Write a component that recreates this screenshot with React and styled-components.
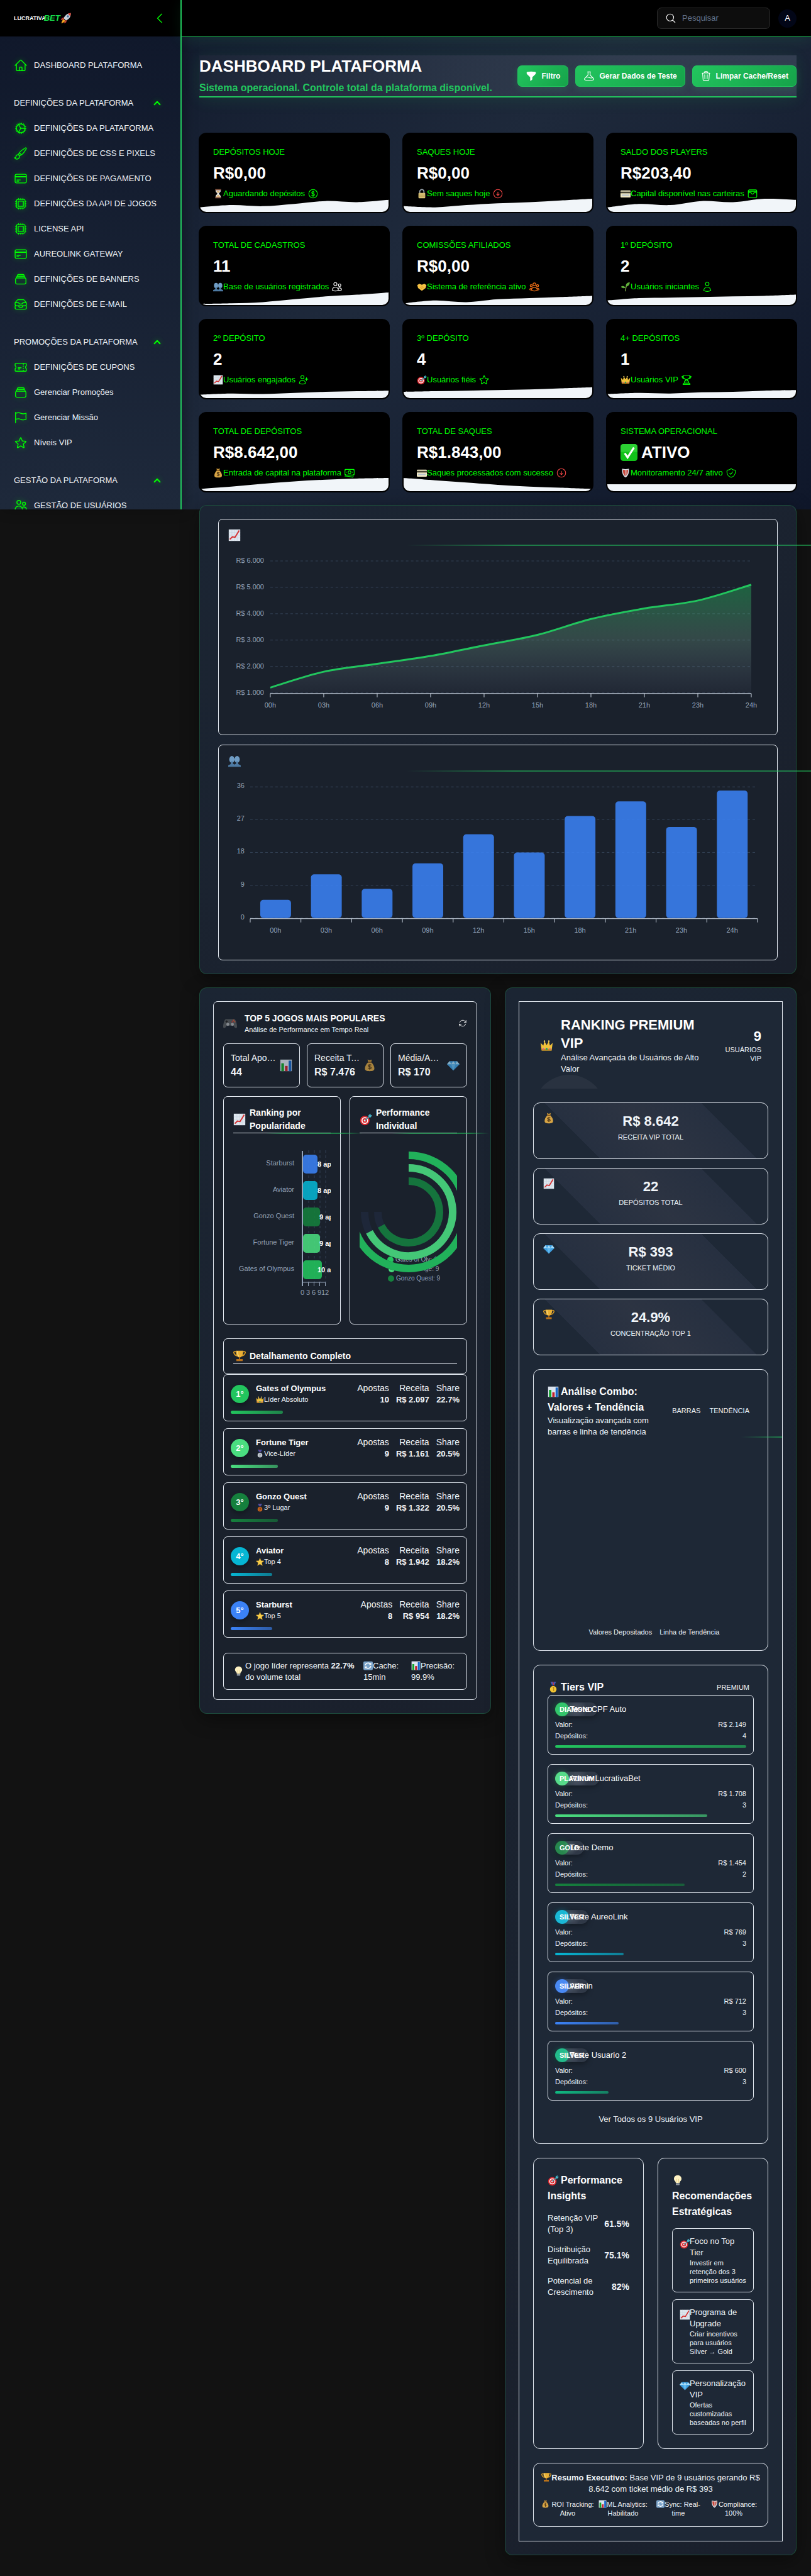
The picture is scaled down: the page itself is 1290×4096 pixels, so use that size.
import React from "react";
import styled, { createGlobalStyle, css } from "styled-components";
import {
  HiOutlineHome, HiOutlineCog, HiOutlinePaintBrush, HiOutlineCreditCard, HiOutlineCpuChip,
  HiOutlineRectangleStack, HiOutlineInboxStack, HiOutlineTicket, HiOutlineFlag, HiOutlineStar,
  HiOutlineUsers, HiOutlineCurrencyDollar, HiOutlineArrowDownCircle, HiOutlineWallet,
  HiOutlineUserGroup, HiOutlineUser, HiOutlineUserPlus, HiOutlineTrophy, HiOutlineBanknotes,
  HiOutlineShieldCheck, HiFunnel, HiOutlineBeaker, HiOutlineTrash, HiOutlineArrowPath,
  HiOutlineMagnifyingGlass, HiChevronUp, HiOutlineChevronLeft,
} from "react-icons/hi2";

const SANS = `"Liberation Sans", Helvetica, Arial, sans-serif`;
const GREEN = "#22c55e";
const NEON = "#00ff00";
const LINE = "#e2e8f0";

const GlobalStyle = createGlobalStyle`
  *, *::before, *::after { box-sizing: border-box; }
  html { background: #121212; }
  body { margin: 0; font-family: ${SANS}; font-size: 13px; line-height: 18px; color: #f1f5f9; }
  h1, h2, h3, h4, p, ul, dl, dd, dt { margin: 0; padding: 0; }
  ul { list-style: none; }
  button, input { font: inherit; color: inherit; }
  button { background: none; border: 0; padding: 0; cursor: pointer; }
  a { color: inherit; text-decoration: none; }
  svg { display: block; flex: none; }
`;

/* ---------- shell ---------- */

const Shell = styled.div`
  display: flex;
  align-items: flex-start;
  overflow-x: clip;
  background: linear-gradient(135deg, #0f172a 0%, #1e293b 50%, #0f172a 100%) no-repeat 0 0 / 100% 810px;
`;

const Sidebar = styled.aside`
  flex: none;
  width: 289px;
  height: 810px;
  overflow: hidden;
  border-right: 2px solid ${GREEN};
  background: linear-gradient(180deg, #0f172a, #1e293b);
  box-shadow: 4px 0 20px rgba(0, 0, 0, 0.3);
`;

const Brand = styled.div`
  display: flex;
  align-items: center;
  justify-content: space-between;
  height: 58px;
  padding: 0 22px;
  background: #000;
`;

const Logo = styled.a`
  display: flex;
  align-items: center;
  font-size: 9px;
  font-weight: 700;
  color: #fff;
`;

const LogoBet = styled.span`
  margin-left: -3px;
  font-size: 13px;
  font-style: italic;
  color: #16e04a;
`;

const Nav = styled.nav`
  display: flex;
  flex-direction: column;
  padding: 26px 22px 0;
`;

const NavGroup = styled.div`
  margin-bottom: 20px;
`;

const NavHeading = styled.button`
  display: flex;
  align-items: center;
  justify-content: space-between;
  width: 100%;
  height: 40px;
  padding-right: 8px;
  text-align: left;
  svg { color: ${NEON}; stroke: ${NEON}; stroke-width: 2; filter: drop-shadow(0 0 4px rgba(0, 255, 0, 0.4)); }
`;

const NavLink = styled.a`
  display: flex;
  align-items: center;
  gap: 10px;
  height: 40px;
  white-space: nowrap;
  svg { color: ${NEON}; filter: drop-shadow(0 0 4px rgba(0, 255, 0, 0.4)); }
`;

const Main = styled.main`
  flex: 1;
  min-width: 0;
`;

const TopBar = styled.header`
  display: flex;
  align-items: center;
  justify-content: flex-end;
  gap: 13px;
  height: 59px;
  padding: 0 23px;
  background: #000;
  border-bottom: 1px solid ${GREEN};
  box-shadow: 0 4px 24px rgba(34, 197, 94, 0.12);
`;

const Search = styled.label`
  display: flex;
  align-items: center;
  gap: 9px;
  width: 180px;
  height: 34px;
  padding: 0 12px;
  border: 1px solid #2b2b2b;
  border-radius: 7px;
  background: #0d0d0d;
  color: #fff;
  input {
    min-width: 0;
    flex: 1;
    padding: 0;
    border: 0;
    outline: 0;
    background: none;
  }
  input::placeholder { color: #64748b; opacity: 1; }
`;

const Avatar = styled.button`
  width: 29px;
  height: 29px;
  border-radius: 50%;
  background: #020617;
  color: #fff;
  font-size: 13px;
`;

const Content = styled.div`
  padding: 29px 23px 32px 28px;
`;

const PageHead = styled.div`
  display: flex;
  align-items: center;
  justify-content: space-between;
  height: 67px;
  margin-bottom: 56px;
  border-bottom: 2px solid ${GREEN};
  background: linear-gradient(90deg, rgba(255, 255, 255, 0.03), rgba(148, 163, 184, 0.2));
  box-shadow: 0 4px 24px rgba(34, 197, 94, 0.12);
`;

const PageTitle = styled.h1`
  font-size: 26px;
  line-height: 30px;
  color: #fff;
`;

const PageSub = styled.p`
  margin-top: 9px;
  font-size: 16px;
  line-height: 22px;
  font-weight: 700;
  color: ${GREEN};
`;

const Actions = styled.div`
  display: flex;
  gap: 11px;
`;

const ActionButton = styled.button`
  display: flex;
  align-items: center;
  gap: 7px;
  height: 34px;
  padding: 0 12px;
  border: 1px solid ${GREEN};
  border-radius: 7px;
  background: linear-gradient(135deg, #22c55e, #16a34a);
  box-shadow: 0 4px 12px rgba(34, 197, 94, 0.2);
  color: #fff;
  font-size: 12px;
  font-weight: 700;
  white-space: nowrap;
`;

/* ---------- metric cards ---------- */

const Metrics = styled.section`
  display: grid;
  grid-template-columns: repeat(3, 1fr);
  gap: 20px;
  margin: 0 -1px 20px;
`;

const Metric = styled.article`
  display: flex;
  flex-direction: column;
  height: 128px;
  padding: 22px 2px 2px;
  overflow: hidden;
  border-radius: 12px;
  background: #000;
`;

const MetricLabel = styled.h2`
  padding: 0 21px;
  font-size: 13px;
  font-weight: 400;
  color: ${NEON};
`;

const MetricValue = styled.p`
  display: flex;
  align-items: center;
  gap: 6px;
  margin: 8px 0;
  padding: 0 21px;
  font-size: 26px;
  line-height: 32px;
  font-weight: 700;
  color: #fff;
`;

const MetricNote = styled.p`
  display: flex;
  align-items: center;
  height: 17px;
  padding: 0 21px;
  color: ${NEON};
  white-space: nowrap;
  > svg:last-child { margin-left: 4px; color: ${(p) => p.$tone || NEON}; }
`;

const Wave = styled.svg`
  width: 100%;
  height: 21px;
  border-radius: 0 0 10px 10px;
`;

/* ---------- shared panels ---------- */

const Panel = styled.section`
  border: 1px solid rgba(34, 197, 94, 0.25);
  border-radius: 12px;
  background: linear-gradient(145deg, #1b2533, #1a202c);
  box-shadow: 0 8px 30px rgba(0, 0, 0, 0.4);
`;

const ChartPanel = styled(Panel)`
  display: grid;
  gap: 15px;
  padding: 21px 29px;
  margin-bottom: 21px;
`;

const Box = styled.div`
  border: 1px solid ${LINE};
  border-radius: ${(p) => p.$radius || 7}px;
`;

const ChartCard = styled(Box)`
  padding: 15px;
  background: #1a212c;
`;

const glowLine = css`
  position: relative;
  &::after {
    content: "";
    position: absolute;
    left: 33%;
    bottom: ${(p) => p.$drop || 0}px;
    width: 100%;
    height: 2px;
    background: linear-gradient(90deg, transparent, ${GREEN} 20%, ${GREEN} 80%, transparent);
    opacity: 0.55;
  }
`;

const ChartHead = styled.h3`
  ${glowLine}
  height: 27px;
`;

const ChartSvg = styled.svg`
  width: 100%;
  height: auto;
  font-family: ${SANS};
  font-size: 11px;
  fill: #94a3b8;
`;

const Columns = styled.div`
  display: grid;
  grid-template-columns: repeat(2, minmax(0, 1fr));
  align-items: start;
  gap: 22px;
`;

const SidePanel = styled(Panel)`
  padding: 21px;
`;

/* ---------- games ---------- */

const GamesCard = styled(Box)`
  padding: 16px 15px 15px;
  background: #1a212c;
`;

const GamesHead = styled.div`
  display: flex;
  align-items: center;
  gap: 12px;
  margin-bottom: 14px;
  > div { flex: 1; }
`;

const GamesTitle = styled.h2`
  font-size: 14px;
  line-height: 20px;
  color: #fff;
`;

const Small = styled.p`
  font-size: 11px;
  line-height: 16px;
`;

const IconButton = styled.button`
  display: flex;
  color: #fff;
`;

const Trio = styled.div`
  display: grid;
  grid-template-columns: repeat(3, minmax(0, 1fr));
  gap: 11px;
  margin-bottom: 14px;
`;

const TrioBox = styled(Box)`
  display: flex;
  align-items: center;
  gap: 5px;
  height: 70px;
  padding: 0 11px;
  > div { flex: 1; min-width: 0; }
`;

const TrioLabel = styled.p`
  overflow: hidden;
  font-size: 14px;
  line-height: 22px;
  text-overflow: ellipsis;
  white-space: nowrap;
`;

const TrioValue = styled.p`
  font-size: 16px;
  line-height: 24px;
  font-weight: 700;
  white-space: nowrap;
`;

const Pair = styled.div`
  display: grid;
  grid-template-columns: repeat(2, minmax(0, 1fr));
  gap: ${(p) => p.$gap}px;
  margin-bottom: 22px;
`;

const MiniCard = styled(Box)`
  padding: 15px;
`;

const MiniHead = styled.h3`
  ${(p) => p.$glow && glowLine}
  display: flex;
  align-items: center;
  gap: 6px;
  border-bottom: 1px solid ${LINE};
  font-size: 14px;
  line-height: 21px;
  color: #fff;
`;

const DetailHead = styled(Box)`
  padding: 15px;
  h3 { line-height: 24px; }
`;

const GameList = styled.ul`
  display: grid;
  gap: 11px;
  margin-bottom: 24px;
`;

const GameRow = styled(Box).attrs({ as: "li" })`
  padding: 13px 11px 11px;
`;

const GameTop = styled.div`
  display: flex;
  align-items: center;
  height: 35px;
  margin-bottom: 9px;
`;

const Rank = styled.span`
  flex: none;
  width: 29px;
  height: 29px;
  margin-right: 11px;
  border-radius: 50%;
  background: ${(p) => p.$color};
  box-shadow: 0 4px 8px rgba(0, 0, 0, 0.3);
  color: #fff;
  font-size: 13px;
  line-height: 29px;
  font-weight: 700;
  text-align: center;
`;

const GameName = styled.div`
  flex: 1;
  h4 { font-size: 13px; line-height: 18px; color: #fff; }
  p { display: flex; align-items: center; font-size: 11px; line-height: 17px; }
`;

const GameFacts = styled.dl`
  display: flex;
  gap: 11px;
  text-align: right;
  dt { font-size: 14px; line-height: 19px; }
  dd { font-size: 13px; line-height: 18px; font-weight: 700; }
`;

const Bar = styled.div`
  height: ${(p) => p.$h}px;
  border-radius: 3px;
  background: linear-gradient(90deg, ${(p) => p.$color}, ${(p) => p.$color}99);
`;

const GamesFoot = styled(Box)`
  display: flex;
  align-items: center;
  height: 59px;
  padding: 0 15px;
  > p { flex: 1; margin-left: 2px; }
`;

const Meta = styled.span`
  width: ${(p) => p.$w}px;
  margin-left: 14px;
  svg { display: inline-block; vertical-align: -3px; }
`;

/* ---------- VIP ---------- */

const VipBox = styled(Box)`
  padding: 22px;
  overflow: hidden;
  border-radius: 0;
  background: #1e2836;
`;

const VipHead = styled.div`
  position: relative;
  display: flex;
  align-items: center;
  gap: 12px;
  margin-bottom: 22px;
  padding: 0 11px 22px;
  overflow: hidden;
  &::before {
    content: "";
    position: absolute;
    left: 0;
    top: 94px;
    width: 115px;
    height: 115px;
    border-radius: 50%;
    background: rgba(255, 255, 255, 0.05);
  }
  > div { flex: 1; }
`;

const VipTitle = styled.h2`
  font-size: 22px;
  line-height: 29px;
  color: #fff;
`;

const VipCount = styled.p`
  width: 66px;
  font-size: 11px;
  line-height: 14px;
  text-align: right;
  strong { display: block; font-size: 22px; line-height: 28px; color: #fff; }
`;

const VipKpis = styled.div`
  display: grid;
  gap: 14px;
  margin-bottom: 22px;
`;

const VipKpi = styled(Box)`
  display: grid;
  grid-template-columns: 1fr auto 1fr;
  height: 90px;
  padding: 15px;
  background: linear-gradient(45deg, transparent 23%, rgba(148, 150, 200, 0.07) 23%, rgba(190, 170, 190, 0.09) 50%, rgba(148, 150, 200, 0.07) 77%, transparent 77%);
  text-align: center;
  strong { display: block; font-size: 22px; line-height: 28px; }
  span { display: block; font-size: 11px; line-height: 22px; }
`;

const VipCard = styled(Box)`
  margin-bottom: ${(p) => (p.$flush ? 0 : 22)}px;
  padding: 22px;
`;

const VipCardTitle = styled.h3`
  font-size: 16px;
  line-height: 25px;
  color: #fff;
  svg { display: inline-block; margin-right: 3px; vertical-align: -4px; }
`;

const SplitHead = styled.div`
  ${(p) => p.$glow && glowLine}
  ${(p) => p.$glow && css`&::after { left: 94%; }`}
  display: flex;
  align-items: center;
  justify-content: space-between;
`;

const ComboText = styled.div`
  width: 168px;
`;

const Tags = styled.div`
  display: flex;
`;

const Tag = styled.button`
  padding: 4px 7px;
  font-size: 11px;
  line-height: 14px;
`;

const ComboPlot = styled.div`
  height: 302px;
`;

const Legend = styled.p`
  display: flex;
  justify-content: center;
  gap: 12px;
  padding-left: 11px;
  font-size: 11px;
  line-height: 14px;
`;

const TierList = styled.ul`
  display: grid;
  gap: 15px;
`;

const TierRow = styled(Box).attrs({ as: "li" })`
  padding: 11px 11px 10px;
`;

const TierTop = styled.div`
  display: flex;
  align-items: center;
  height: 22px;
  margin-bottom: 4px;
  color: #fff;
`;

const TierDot = styled.span`
  position: relative;
  flex: none;
  width: 22px;
  height: 22px;
  margin-right: 1px;
  border-radius: 50%;
  background: ${(p) => p.$color};
  box-shadow: 0 0 8px ${(p) => p.$color}66;
`;

const TierBadge = styled.span`
  position: absolute;
  left: 0;
  top: 0;
  height: 22px;
  padding: 0 7px;
  border-radius: 11px;
  background: radial-gradient(circle at 50% 50%, rgba(210, 215, 230, 0.28), rgba(200, 200, 220, 0.1) 50%);
  box-shadow: 0 3px 8px rgba(0, 0, 0, 0.35);
  font-size: 11px;
  line-height: 22px;
  font-weight: 700;
`;

const TierName = styled.span`
  position: relative;
`;

const TierFacts = styled.dl`
  margin-bottom: 6px;
  font-size: 11px;
  div { display: flex; justify-content: space-between; }
`;

const MoreButton = styled.button`
  width: 100%;
  height: 32px;
  margin-top: 14px;
`;

const Insight = styled.p`
  display: flex;
  align-items: center;
  justify-content: space-between;
  gap: 6px;
  margin-top: 14px;
  strong { font-size: 14px; }
`;

const TipList = styled.ul`
  display: grid;
  gap: 11px;
  margin-top: 14px;
`;

const Tip = styled(Box).attrs({ as: "li" })`
  display: flex;
  padding: 11px 10px 11px 11px;
  > svg { margin: 4px 0 0 0; }
  > div { flex: 1; margin-left: -1px; }
  p { font-size: 11px; line-height: 14px; }
  h4 { font-size: 13px; font-weight: 400; }
`;

const Summary = styled(Box)`
  padding: 14px 10px;
  text-align: center;
  svg { display: inline-block; vertical-align: -3px; }
`;

const SummaryFacts = styled.ul`
  display: grid;
  grid-template-columns: repeat(4, minmax(0, 1fr));
  margin-top: 8px;
  font-size: 11px;
  line-height: 14px;
  svg { vertical-align: -2px; }
`;

/* ---------- pictograms ---------- */

const GLYPHS = {
  hourglass: <><path d="M6 3h12v2c0 4-4 5-4 7s4 3 4 7v2H6v-2c0-4 4-5 4-7S6 9 6 5z" fill="#e8eef2" /><path d="M8 6h8c-1 3-3 4-4 5-1-1-3-2-4-5zM7 20c1-4 4-4 5-6 1 2 4 2 5 6z" fill="#d8b47e" /><path d="M5 1h14v3H5zM5 20h14v3H5z" fill="#8a5a44" /></>,
  lock: <><path d="M7 11V7a5 5 0 0 1 10 0v4" fill="none" stroke="#9aa4ad" strokeWidth="2.6" /><rect x="4" y="10" width="16" height="13" rx="1.5" fill="#d9c277" /><path d="M4 13h16M4 16h16M4 19h16" stroke="#b39a4e" /></>,
  card: <><rect x="0" y="4" width="24" height="17" rx="2" fill="#efe7c4" /><rect x="0" y="7" width="24" height="4" fill="#4a4636" /><rect x="3" y="14" width="18" height="3" fill="#b9c4cf" /></>,
  people: <><ellipse cx="7" cy="9" rx="5" ry="6.5" fill="#6f9cc4" /><ellipse cx="17" cy="9" rx="5" ry="6.5" fill="#6f9cc4" /><path d="M5 13h4v4l3 2v4H0v-2c0-2 5-2 5-4zM15 13h4v4c0 2 5 2 5 4v2H12v-4l3-2z" fill="#4d7aa3" /></>,
  hands: <><path d="M1 8l5-3 6 2 6-2 5 3-2 7-8 6h-2l-8-6z" fill="#f6c244" /><path d="M8 12l5 5M11 10l5 5" stroke="#c98a1b" strokeWidth="1.4" /></>,
  seedling: <><path d="M12 23c0-7 0-10 3-14" fill="none" stroke="#6b8f3c" strokeWidth="2.4" /><path d="M13 11c-1-6 3-9 9-10 0 6-3 10-9 10zM12 14C9 9 4 9 1 12c3 4 8 4 11 2z" fill="#5fae3a" /></>,
  up: <><rect x="1" y="1" width="22" height="22" fill="#dfe7ef" /><path d="M1 7h22M1 12h22M1 17h22M7 1v22M12 1v22M17 1v22" stroke="#c3cfdb" strokeWidth=".7" /><path d="M3 20l5-5 5 1 8-13" fill="none" stroke="#d62b2b" strokeWidth="2.2" /></>,
  target: <><circle cx="10" cy="14" r="9" fill="#d9262c" /><circle cx="10" cy="14" r="6.4" fill="#fff" /><circle cx="10" cy="14" r="4.4" fill="#d9262c" /><circle cx="10" cy="14" r="2" fill="#fff" /><path d="M10 14l8-7" stroke="#3e98a8" strokeWidth="2" /><path d="M17 8V4l4-3v3h3l-3 4z" fill="#46b5c8" /></>,
  crown: <><path d="M1 7l5 5 2-8 4 7 4-7 2 8 5-5-2 14H3z" fill="#f0c13a" /><path d="M3 18h18v3H3z" fill="#c98e1c" /><circle cx="12" cy="18" r="1.8" fill="#19a06b" /><circle cx="6" cy="18" r="1.3" fill="#d250b0" /><circle cx="18" cy="18" r="1.3" fill="#d250b0" /><circle cx="8" cy="4" r="1.4" fill="#f6d76b" /><circle cx="16" cy="4" r="1.4" fill="#f6d76b" /></>,
  bag: <><path d="M8 1l4 1.500 4-1.500-1 5H9z" fill="#c8963a" /><path d="M9 6h6c4 4 6 8 6 12 0 4-3 5-9 5s-9-1-9-5c0-4 2-8 6-12z" fill="#d6a445" /><path d="M8.500 6h7" stroke="#7b4f1d" strokeWidth="2" /><path d="M15 12c-1-2-6-1.500-5.500 1 .5 2 5.500 1 5.500 3.500 0 2-5 2-6 0M12 10v10" fill="none" stroke="#4c3312" strokeWidth="1.600" /></>,
  shield: <><path d="M4 2q8 2 16 0c1 9-1 17-8 21C5 19 3 11 4 2z" fill="#d8dee4" /><path d="M6 4q3 .8 6 .8V20C7 16 5.500 11 6 4z" fill="#c9483b" /><path d="M14 5q2 0 4-1c0 6-1 11-4 14z" fill="#c9483b" /></>,
  check: <><rect x="0" y="0" width="24" height="24" rx="4" fill="#12c21a" /><path d="M0 4a4 4 0 0 1 4-4h16a4 4 0 0 1 4 4v7H0z" fill="#3ddb45" opacity=".6" /><path d="M6 13l4 6 9-14" fill="none" stroke="#fff" strokeWidth="2.800" /></>,
  pad: <><path d="M5 5h14c3 0 5 9 5 13 0 4-4 3-6-2H6c-2 5-6 6-6 2C0 14 2 5 5 5z" fill="#55595c" /><circle cx="8" cy="14" r="2.600" fill="#a9adb0" /><circle cx="16" cy="14" r="2.600" fill="#a9adb0" /><path d="M6 7v4M4 9h4" stroke="#222" strokeWidth="1.400" /><circle cx="18" cy="7" r="1.200" fill="#e0542f" /><circle cx="20" cy="9.500" r="1.200" fill="#e0542f" /><circle cx="16" cy="9.500" r="1.200" fill="#c33" /></>,
  bars: <><rect x="1" y="1" width="22" height="22" fill="#dbe4ee" /><rect x="3" y="8" width="5" height="15" fill="#12a52a" /><rect x="10" y="13" width="5" height="10" fill="#c5202c" /><rect x="17" y="3" width="5" height="20" fill="#1565c8" /></>,
  gem: <><path d="M5 4h14l5 6-12 12L0 10z" fill="#3f9fe0" /><path d="M5 4l3 6-8 0zM19 4l-3 6h8zM12 4l4 6H8z" fill="#a8dcf8" /><path d="M8 10h8l-4 12z" fill="#63b9ee" /></>,
  trophy: <><path d="M5 4C1 3 0 5 2 8c1 2 3 4 6 4M19 4c4-1 5 1 3 4-1 2-3 4-6 4" fill="none" stroke="#d89a22" strokeWidth="2" /><path d="M5 2h14c0 8-2 12-7 13-5-1-7-5-7-13z" fill="#eab035" /><path d="M11 14h2v4h-2zM6 18h12v4H6z" fill="#b9711a" /><path d="M8 3c0 5 1 8 3 10" stroke="#fbe08a" strokeWidth="1.500" fill="none" /></>,
  medal1: <><path d="M6 0h5l3 9-3 2zM18 0h-5l-3 9 3 2z" fill="#3b56b8" /><path d="M9 0h2l2 7M15 0h-2" stroke="#d33" strokeWidth="1.600" fill="none" /><circle cx="12" cy="16" r="7" fill="#f3c634" /><path d="M11 13l2-1v8" stroke="#b07e12" strokeWidth="1.600" fill="none" /></>,
  medal2: <><path d="M6 0h5l3 9-3 2zM18 0h-5l-3 9 3 2z" fill="#3b56b8" /><path d="M9 0h2l2 7M15 0h-2" stroke="#d33" strokeWidth="1.600" fill="none" /><circle cx="12" cy="16" r="7" fill="#c3cad1" /><path d="M10 14c1-2 4-1 4 .5S10 18 10 19h4" stroke="#7b848c" strokeWidth="1.500" fill="none" /></>,
  medal3: <><path d="M6 0h5l3 9-3 2zM18 0h-5l-3 9 3 2z" fill="#3b56b8" /><path d="M9 0h2l2 7M15 0h-2" stroke="#d33" strokeWidth="1.600" fill="none" /><circle cx="12" cy="16" r="7" fill="#c2621d" /><path d="M10 13h4l-2 3c3 0 2 4-2 3" stroke="#6e3008" strokeWidth="1.400" fill="none" /></>,
  star: <path d="M12 1l3.200 7.600 8.300.7-6.300 5.400 1.900 8.100L12 18.500l-7.100 4.300 1.900-8.100L.5 9.300l8.300-.7z" fill="#f8cf4a" stroke="#e3a52c" strokeWidth=".8" />,
  bulb: <><path d="M12 1c5 0 8 3.500 8 7.500 0 4-4 5-4 9H8c0-4-4-5-4-9C4 4.500 7 1 12 1z" fill="#fff3c4" /><path d="M10 9v8M14 9v8" stroke="#e3c979" /><rect x="8" y="18" width="8" height="4" rx="1.500" fill="#8f979e" /></>,
  sync: <><rect x="0" y="1" width="24" height="22" rx="3" fill="#7aa3c9" /><path d="M5 11c1-6 9-8 13-3M19 13c-1 6-9 8-13 3" fill="none" stroke="#fff" strokeWidth="2.400" /><path d="M20 4v6h-6zM4 20v-6h6z" fill="#fff" /></>,
  rocket: <><path d="M22 1c-7 0-12 5-15 11l5 5c6-3 11-8 10-16z" fill="#c9d2da" /><path d="M22 1c-2 0-4 .5-6 1.500l5 5c1-2 1.200-4 1-6.500z" fill="#d33a2c" /><circle cx="16" cy="8" r="2.200" fill="#3c6a94" /><path d="M8 10L3 12l-2 4 6-1zM14 16l-2 5-4 2 1-6z" fill="#c6402f" /><path d="M7 14l3 3c-1 3-4 5-8 6 1-4 2-7 5-9z" fill="#f5a623" /></>,
};

const Glyph = ({ name, size = 13, dim }) => (
  <svg width={size} height={size} viewBox="0 0 24 24" opacity={dim ? 0.75 : 1} aria-hidden="true">
    {GLYPHS[name]}
  </svg>
);

/* ---------- data ---------- */

const NAV = [
  { items: [[HiOutlineHome, "DASHBOARD PLATAFORMA"]] },
  {
    title: "DEFINIÇÕES DA PLATAFORMA",
    items: [
      [HiOutlineCog, "DEFINIÇÕES DA PLATAFORMA"],
      [HiOutlinePaintBrush, "DEFINIÇÕES DE CSS E PIXELS"],
      [HiOutlineCreditCard, "DEFINIÇÕES DE PAGAMENTO"],
      [HiOutlineCpuChip, "DEFINIÇÕES DA API DE JOGOS"],
      [HiOutlineCpuChip, "LICENSE API"],
      [HiOutlineCreditCard, "AUREOLINK GATEWAY"],
      [HiOutlineRectangleStack, "DEFINIÇÕES DE BANNERS"],
      [HiOutlineInboxStack, "DEFINIÇÕES DE E-MAIL"],
    ],
  },
  {
    title: "PROMOÇÕES DA PLATAFORMA",
    items: [
      [HiOutlineTicket, "DEFINIÇÕES DE CUPONS"],
      [HiOutlineRectangleStack, "Gerenciar Promoções"],
      [HiOutlineFlag, "Gerenciar Missão"],
      [HiOutlineStar, "Níveis VIP"],
    ],
  },
  { title: "GESTÃO DA PLATAFORMA", items: [[HiOutlineUsers, "GESTÃO DE USUÁRIOS"]] },
];

const METRICS = [
  ["DEPÓSITOS HOJE", "R$0,00", "hourglass", "Aguardando depósitos", HiOutlineCurrencyDollar, NEON, [8, 12, 10, 14, 19, 17, 21]],
  ["SAQUES HOJE", "R$0,00", "lock", "Sem saques hoje", HiOutlineArrowDownCircle, "#ef4444", [10, 8, 12, 15, 17, 20, 23]],
  ["SALDO DOS PLAYERS", "R$203,40", "card", "Capital disponível nas carteiras", HiOutlineWallet, NEON, [8, 14, 12, 19, 17, 23, 21]],
  ["TOTAL DE CADASTROS", "11", "people", "Base de usuários registrados", HiOutlineUsers, "#fff", [2, 3, 5, 10, 15, 18, 22]],
  ["COMISSÕES AFILIADOS", "R$0,00", "hands", "Sistema de referência ativo", HiOutlineUserGroup, "#f97316", [3, 8, 5, 10, 12, 14, 16]],
  ["1º DEPÓSITO", "2", "seedling", "Usuários iniciantes", HiOutlineUser, NEON, [8, 12, 13, 14, 15, 16, 18]],
  ["2º DEPÓSITO", "2", "up", "Usuários engajados", HiOutlineUserPlus, NEON, [6, 8, 7, 9, 11, 12, 13]],
  ["3º DEPÓSITO", "4", "target", "Usuários fiéis", HiOutlineStar, NEON, [11, 12, 13, 14, 15, 17, 19]],
  ["4+ DEPÓSITOS", "1", "crown", "Usuários VIP", HiOutlineTrophy, NEON, [7, 9, 8, 10, 11, 13, 14]],
  ["TOTAL DE DEPÓSITOS", "R$8.642,00", "bag", "Entrada de capital na plataforma", HiOutlineBanknotes, NEON, [4, 8, 13, 17, 20, 22, 23]],
  ["TOTAL DE SAQUES", "R$1.843,00", "card", "Saques processados com sucesso", HiOutlineArrowDownCircle, "#ef4444", [23, 19, 15, 11, 8, 6, 4]],
  ["SISTEMA OPERACIONAL", "ATIVO", "shield", "Monitoramento 24/7 ativo", HiOutlineShieldCheck, NEON, [12, 12, 12, 12, 12, 12, 12]],
];

const HOURS = ["00h", "03h", "06h", "09h", "12h", "15h", "18h", "21h", "23h", "24h"];
const REVENUE = [1200, 1800, 2100, 2400, 2800, 3200, 3800, 4200, 4500, 5100];
const USERS = [5, 12, 8, 15, 23, 18, 28, 32, 25, 35];

const GAMES = [
  { name: "Gates of Olympus", glyph: "crown", note: "Líder Absoluto", bets: 10, revenue: "R$ 2.097", share: 22.7, color: "#22c55e" },
  { name: "Fortune Tiger", glyph: "medal2", note: "Vice-Líder", bets: 9, revenue: "R$ 1.161", share: 20.5, color: "#4ade80" },
  { name: "Gonzo Quest", glyph: "medal3", note: "3º Lugar", bets: 9, revenue: "R$ 1.322", share: 20.5, color: "#15803d" },
  { name: "Aviator", glyph: "star", note: "Top 4", bets: 8, revenue: "R$ 1.942", share: 18.2, color: "#06b6d4" },
  { name: "Starburst", glyph: "star", note: "Top 5", bets: 8, revenue: "R$ 954", share: 18.2, color: "#3b82f6" },
];

const TIERS = [
  ["DIAMOND", "Teste CPF Auto", 2149, 4, "#22c55e"],
  ["PLATINUM", "Admin LucrativaBet", 1708, 3, "#4ade80"],
  ["GOLD", "Teste Demo", 1454, 2, "#15803d"],
  ["SILVER", "Teste AureoLink", 769, 3, "#06b6d4"],
  ["SILVER", "Admin", 712, 3, "#3b82f6"],
  ["SILVER", "Teste Usuario 2", 600, 3, "#10b981"],
];

const money = (n) => "R$ " + String(n).replace(/(\d)(\d{3})$/, "$1.$2");

/* Catmull-Rom spline through the given points */
const curve = (pts) => {
  let d = `M${pts[0][0]} ${pts[0][1]}`;
  for (let i = 0; i < pts.length - 1; i++) {
    const p0 = pts[i - 1] || pts[i];
    const p1 = pts[i];
    const p2 = pts[i + 1];
    const p3 = pts[i + 2] || p2;
    const c1 = [p1[0] + (p2[0] - p0[0]) / 6, p1[1] + (p2[1] - p0[1]) / 6];
    const c2 = [p2[0] - (p3[0] - p1[0]) / 6, p2[1] - (p3[1] - p1[1]) / 6];
    d += ` C${c1[0]} ${c1[1]} ${c2[0]} ${c2[1]} ${p2[0]} ${p2[1]}`;
  }
  return d;
};

/* ---------- charts ---------- */

function RevenueChart() {
  const x = (i) => 67 + i * (766 / 9);
  const y = (v) => 24 + (6000 - v) * 0.042;
  const path = curve(REVENUE.map((v, i) => [x(i), y(v)]));
  return (
    <ChartSvg viewBox="0 0 859 285" role="img" aria-label="Receita por hora">
      <defs>
        <linearGradient id="revenue" x1="0" y1="0" x2="0" y2="1">
          <stop offset="0" stopColor="#22c55e" stopOpacity="0.4" />
          <stop offset="0.5" stopColor="#6fa58a" stopOpacity="0.3" />
          <stop offset="1" stopColor="#8a93b4" stopOpacity="0.06" />
        </linearGradient>
      </defs>
      {[6000, 5000, 4000, 3000, 2000, 1000].map((v) => (
        <g key={v}>
          <line x1="67" x2="833" y1={y(v)} y2={y(v)} stroke="#334155" strokeDasharray="4" />
          <text x="57" y={y(v) + 3} textAnchor="end">{money(v)}</text>
        </g>
      ))}
      <path d={`${path} L833 234 L67 234 Z`} fill="url(#revenue)" />
      <path d={path} fill="none" stroke={GREEN} strokeWidth="3" />
      <line x1="67" x2="833" y1="235" y2="235" stroke="#cbd5e1" />
      {HOURS.map((h, i) => (
        <g key={h}>
          <line x1={x(i)} x2={x(i)} y1="235" y2="241" stroke="#cbd5e1" />
          <text x={x(i)} y="257" textAnchor="middle">{h}</text>
        </g>
      ))}
    </ChartSvg>
  );
}

function UsersChart() {
  const band = 80.8;
  const y = (v) => 233 - v * 5.8;
  return (
    <ChartSvg viewBox="0 0 859 285" role="img" aria-label="Usuários por hora">
      {[36, 27, 18, 9, 0].map((v) => (
        <g key={v}>
          <line x1="35" x2="843" y1={y(v)} y2={y(v)} stroke="#334155" strokeDasharray="4" />
          <text x="26" y={y(v) + 2} textAnchor="end">{v}</text>
        </g>
      ))}
      {USERS.map((v, i) => (
        <rect key={HOURS[i]} x={35 + i * band + 16} y={y(v)} width="49" height={233 - y(v)} rx="5" fill="#3b82f6" opacity="0.87" />
      ))}
      <line x1="35" x2="843" y1="234" y2="234" stroke="#cbd5e1" />
      {[...HOURS, ""].map((h, i) => (
        <g key={i}>
          <line x1={35 + i * band} x2={35 + i * band} y1="234" y2="240" stroke="#cbd5e1" />
          <text x={35 + i * band + band / 2} y="256" textAnchor="middle">{h}</text>
        </g>
      ))}
    </ChartSvg>
  );
}

function PopularityChart() {
  const rows = [...GAMES].reverse();
  return (
    <ChartSvg viewBox="0 -3 155 288" role="img" aria-label="Apostas por jogo">
      {[120, 129, 138, 147].map((x) => (
        <line key={x} x1={x} x2={x} y1="24" y2="234" stroke="#334155" strokeDasharray="4" />
      ))}
      {rows.map((g, i) => (
        <g key={g.name}>
          <text x="97" y={48 + i * 42} textAnchor="end">{g.name}</text>
          <rect x="111" y={31 + i * 42} width={g.bets * 3 - (g.bets === 8 ? 1 : 0)} height="30" rx="5" fill={g.color} opacity="0.87" />
          <text x={g.bets === 9 ? 137 : 134} y={50 + i * 42} fill="#fff" fontWeight="700">{g.bets} apostas</text>
        </g>
      ))}
      <line x1="110" x2="110" y1="25" y2="240" stroke="#94a3b8" strokeWidth="2" />
      <line x1="110" x2="147" y1="234" y2="234" stroke="#94a3b8" />
      {[0, 3, 6, 9, 12].map((v, i) => (
        <g key={v}>
          <line x1={110.5 + i * 9} x2={110.5 + i * 9} y1="234" y2="240" stroke="#94a3b8" />
          <text x={110 + i * 9} y="254" textAnchor="middle">{v}</text>
        </g>
      ))}
    </ChartSvg>
  );
}

function RadialChart() {
  const arc = (r, deg) => {
    const a = (deg * Math.PI) / 180;
    return `M78 ${122 - r} A${r} ${r} 0 1 1 ${78 + r * Math.sin(a)} ${122 - r * Math.cos(a)}`;
  };
  const rings = [[90, 270], [70, 243], [49, 243]];
  return (
    <ChartSvg viewBox="0 -3 155 288" role="img" aria-label="Performance dos três primeiros jogos">
      {GAMES.slice(0, 3).map((g, i) => (
        <g key={g.name} fontSize="10">
          <circle cx={[49, 51, 50][i]} cy={198 + i * 15} r="5" fill={g.color} />
          <text x={[57, 59, 58][i]} y={201 + i * 15}>{g.name.slice(0, 12)}: {g.bets}</text>
        </g>
      ))}
      {rings.map(([r, deg], i) => (
        <g key={r} fill="none" strokeWidth="12">
          <path d={arc(r, 270)} stroke="#1e2739" />
          <path d={arc(r, deg)} stroke={GAMES[i].color} opacity="0.88" />
        </g>
      ))}
    </ChartSvg>
  );
}

/* ---------- sections ---------- */

function SideNav() {
  return (
    <Sidebar>
      <Brand>
        <Logo href="#">
          LUCRATIVA<LogoBet>BET</LogoBet>
          <Glyph name="rocket" size={18} />
        </Logo>
        <IconButton aria-label="Recolher menu">
          <HiOutlineChevronLeft size={22} color={NEON} />
        </IconButton>
      </Brand>
      <Nav>
        {NAV.map((group, i) => (
          <NavGroup key={i}>
            {group.title && (
              <NavHeading>
                {group.title}
                <HiChevronUp size={14} />
              </NavHeading>
            )}
            {group.items.map(([Icon, label]) => (
              <NavLink href="#" key={label}>
                <Icon size={22} />
                {label}
              </NavLink>
            ))}
          </NavGroup>
        ))}
      </Nav>
    </Sidebar>
  );
}

function MetricCard({ data }) {
  const [label, value, glyph, note, Icon, tone, heights] = data;
  const pts = heights.map((h, i) => [i * 50, 23 - h]);
  return (
    <Metric>
      <MetricLabel>{label}</MetricLabel>
      <MetricValue>
        {value === "ATIVO" && <Glyph name="check" size={27} />}
        {value}
      </MetricValue>
      <MetricNote $tone={tone}>
        <Glyph name={glyph} size={16} />
        {note}
        <Icon size={18} />
      </MetricNote>
      <Wave viewBox="0 0 300 23" preserveAspectRatio="none" aria-hidden="true">
        <path d={`${curve(pts)} V23 H0 Z`} fill="#f1f5f9" />
      </Wave>
    </Metric>
  );
}

function Games() {
  return (
    <SidePanel>
      <GamesCard>
        <GamesHead>
          <Glyph name="pad" size={22} dim />
          <div>
            <GamesTitle>TOP 5 JOGOS MAIS POPULARES</GamesTitle>
            <Small>Análise de Performance em Tempo Real</Small>
          </div>
          <IconButton aria-label="Atualizar">
            <HiOutlineArrowPath size={14} />
          </IconButton>
        </GamesHead>
        <Trio>
          {[
            ["Total Apostas", "44", "bars"],
            ["Receita Total", "R$ 7.476", "bag"],
            ["Média/Aposta", "R$ 170", "gem"],
          ].map(([label, value, glyph]) => (
            <TrioBox key={label}>
              <div>
                <TrioLabel>{label}</TrioLabel>
                <TrioValue>{value}</TrioValue>
              </div>
              <Glyph name={glyph} size={20} dim />
            </TrioBox>
          ))}
        </Trio>
        <Pair $gap={14}>
          <MiniCard>
            <MiniHead $glow $drop={-2}>
              <Glyph name="up" size={20} />
              Ranking por Popularidade
            </MiniHead>
            <PopularityChart />
          </MiniCard>
          <MiniCard>
            <MiniHead $glow $drop={-2}>
              <Glyph name="target" size={20} />
              Performance Individual
            </MiniHead>
            <RadialChart />
          </MiniCard>
        </Pair>
        <DetailHead>
          <MiniHead>
            <Glyph name="trophy" size={20} />
            Detalhamento Completo
          </MiniHead>
        </DetailHead>
        <GameList>
          {GAMES.map((g, i) => (
            <GameRow key={g.name}>
              <GameTop>
                <Rank $color={g.color}>{i + 1}°</Rank>
                <GameName>
                  <h4>{g.name}</h4>
                  <p>
                    <Glyph name={g.glyph} size={13} />
                    {g.note}
                  </p>
                </GameName>
                <GameFacts>
                  <div><dt>Apostas</dt><dd>{g.bets}</dd></div>
                  <div><dt>Receita</dt><dd>{g.revenue}</dd></div>
                  <div><dt>Share</dt><dd>{g.share}%</dd></div>
                </GameFacts>
              </GameTop>
              <Bar $h={5} $color={g.color} style={{ width: `${g.share}%` }} />
            </GameRow>
          ))}
        </GameList>
        <GamesFoot>
          <Glyph name="bulb" size={17} />
          <p>
            O jogo líder representa <strong>22.7%</strong> do volume total
          </p>
          <Meta $w={62}><Glyph name="sync" size={15} />Cache: 15min</Meta>
          <Meta $w={73}><Glyph name="bars" size={15} />Precisão: 99.9%</Meta>
        </GamesFoot>
      </GamesCard>
    </SidePanel>
  );
}

function Vip() {
  return (
    <SidePanel>
      <VipBox>
        <VipHead>
          <Glyph name="crown" size={21} />
          <div>
            <VipTitle>RANKING PREMIUM VIP</VipTitle>
            <p>Análise Avançada de Usuários de Alto Valor</p>
          </div>
          <VipCount><strong>9</strong>USUÁRIOS VIP</VipCount>
        </VipHead>
        <VipKpis>
          {[
            ["bag", "R$ 8.642", "RECEITA VIP TOTAL"],
            ["up", "22", "DEPÓSITOS TOTAL"],
            ["gem", "R$ 393", "TICKET MÉDIO"],
            ["trophy", "24.9%", "CONCENTRAÇÃO TOP 1"],
          ].map(([glyph, value, label]) => (
            <VipKpi $radius={11} key={label}>
              <Glyph name={glyph} size={18} />
              <div>
                <strong>{value}</strong>
                <span>{label}</span>
              </div>
            </VipKpi>
          ))}
        </VipKpis>
        <VipCard $radius={11}>
          <SplitHead $glow>
            <ComboText>
              <VipCardTitle><Glyph name="bars" size={18} />Análise Combo: Valores + Tendência</VipCardTitle>
              <p>Visualização avançada com barras e linha de tendência</p>
            </ComboText>
            <Tags>
              <Tag>BARRAS</Tag>
              <Tag>TENDÊNCIA</Tag>
            </Tags>
          </SplitHead>
          <ComboPlot />
          <Legend>
            <span>Valores Depositados</span>
            <span>Linha de Tendência</span>
          </Legend>
        </VipCard>
        <VipCard $radius={11}>
          <SplitHead>
            <VipCardTitle><Glyph name="medal1" size={18} />Tiers VIP</VipCardTitle>
            <Tag>PREMIUM</Tag>
          </SplitHead>
          <TierList>
            {TIERS.map(([tier, name, value, deposits, color]) => (
              <TierRow key={name}>
                <TierTop>
                  <TierDot $color={color}>
                    <TierBadge>{tier}</TierBadge>
                  </TierDot>
                  <TierName>{name}</TierName>
                </TierTop>
                <TierFacts>
                  <div><dt>Valor:</dt><dd>{money(value)}</dd></div>
                  <div><dt>Depósitos:</dt><dd>{deposits}</dd></div>
                </TierFacts>
                <Bar $h={4} $color={color} style={{ width: `${(value / 2149) * 100}%` }} />
              </TierRow>
            ))}
          </TierList>
          <MoreButton>Ver Todos os 9 Usuários VIP</MoreButton>
        </VipCard>
        <Pair $gap={22}>
          <VipCard $radius={11} $flush>
            <VipCardTitle><Glyph name="target" size={18} />Performance Insights</VipCardTitle>
            <Insight><span>Retenção VIP (Top 3)</span><strong>61.5%</strong></Insight>
            <Insight><span>Distribuição Equilibrada</span><strong>75.1%</strong></Insight>
            <Insight><span>Potencial de Crescimento</span><strong>82%</strong></Insight>
          </VipCard>
          <VipCard $radius={11} $flush>
            <VipCardTitle><Glyph name="bulb" size={18} /> Recomendações Estratégicas</VipCardTitle>
            <TipList>
              {[
                ["target", "Foco no Top Tier", "Investir em retenção dos 3 primeiros usuários"],
                ["up", "Programa de Upgrade", "Criar incentivos para usuários Silver → Gold"],
                ["gem", "Personalização VIP", "Ofertas customizadas baseadas no perfil"],
              ].map(([glyph, title, text]) => (
                <Tip key={title}>
                  <Glyph name={glyph} size={17} />
                  <div>
                    <h4>{title}</h4>
                    <p>{text}</p>
                  </div>
                </Tip>
              ))}
            </TipList>
          </VipCard>
        </Pair>
        <Summary $radius={11}>
          <p>
            <Glyph name="trophy" size={16} />
            <strong>Resumo Executivo:</strong> Base VIP de 9 usuários gerando R$ 8.642 com ticket médio de R$ 393
          </p>
          <SummaryFacts>
            <li><Glyph name="bag" /> ROI Tracking: Ativo</li>
            <li><Glyph name="bars" />ML Analytics: Habilitado</li>
            <li><Glyph name="sync" />Sync: Real-time</li>
            <li><Glyph name="shield" />Compliance: 100%</li>
          </SummaryFacts>
        </Summary>
      </VipBox>
    </SidePanel>
  );
}

export default function App() {
  return (
    <>
      <GlobalStyle />
      <Shell>
        <SideNav />
        <Main>
          <TopBar>
            <Search>
              <HiOutlineMagnifyingGlass size={18} />
              <input type="search" placeholder="Pesquisar" aria-label="Pesquisar" />
            </Search>
            <Avatar aria-label="Conta">A</Avatar>
          </TopBar>
          <Content>
            <PageHead>
              <div>
                <PageTitle>DASHBOARD PLATAFORMA</PageTitle>
                <PageSub>Sistema operacional. Controle total da plataforma disponível.</PageSub>
              </div>
              <Actions>
                <ActionButton><HiFunnel size={18} />Filtro</ActionButton>
                <ActionButton><HiOutlineBeaker size={18} />Gerar Dados de Teste</ActionButton>
                <ActionButton><HiOutlineTrash size={18} />Limpar Cache/Reset</ActionButton>
              </Actions>
            </PageHead>
            <Metrics>
              {METRICS.map((m) => <MetricCard key={m[0]} data={m} />)}
            </Metrics>
            <ChartPanel>
              <ChartCard>
                <ChartHead><Glyph name="up" size={20} /></ChartHead>
                <RevenueChart />
              </ChartCard>
              <ChartCard>
                <ChartHead><Glyph name="people" size={20} /></ChartHead>
                <UsersChart />
              </ChartCard>
            </ChartPanel>
            <Columns>
              <Games />
              <Vip />
            </Columns>
          </Content>
        </Main>
      </Shell>
    </>
  );
}
